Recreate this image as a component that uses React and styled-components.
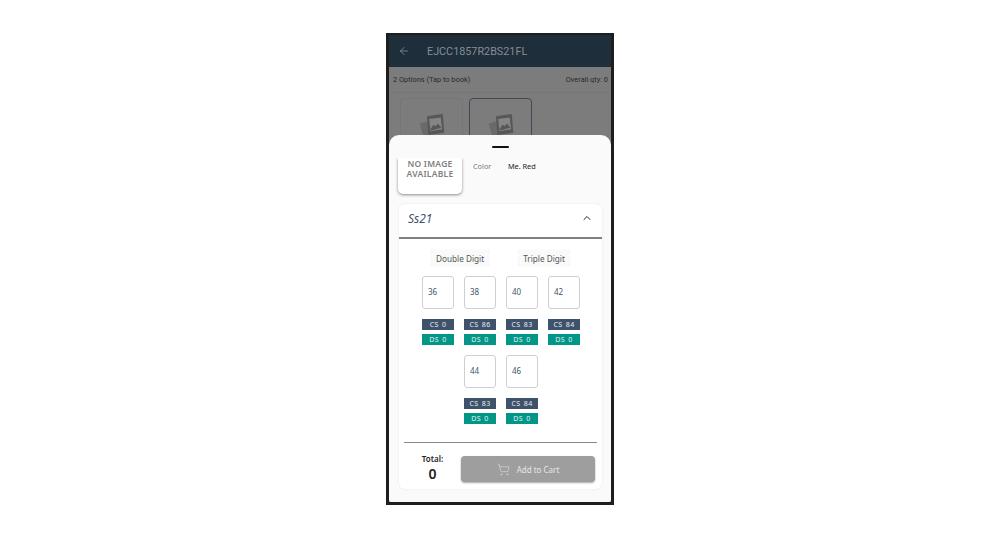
import styled, { createGlobalStyle } from "styled-components";
import { ArrowLeft, ChevronUp, ShoppingCart } from "lucide-react";

const sizes = [
  { size: 36, cs: 0 },
  { size: 38, cs: 86 },
  { size: 40, cs: 83 },
  { size: 42, cs: 84 },
  { size: 44, cs: 83 },
  { size: 46, cs: 84 },
];

function PlaceholderIcon() {
  return (
    <svg width="26" height="26" viewBox="0 0 36 36">
      <path d="M1 13 L12 10 L16 32 L7 34 Z" fill="#6a6a6a" />
      <path d="M11 3 L33 0 L35 26 L13 29 Z" fill="#575757" />
      <path d="M14 7 L30 5 L32 21 L16 24 Z" fill="#858585" />
      <path d="M16 21 L20 15 L23 17 L26 13 L31 19 L17 23 Z" fill="#575757" />
    </svg>
  );
}

function App() {
  return (
    <>
      <GlobalStyle />
      <Page>
        <Phone>
          <TopBar>
            <ArrowLeft size={12} color="#8f979e" strokeWidth={1.5} />
            <Code>EJCC1857R2BS21FL</Code>
          </TopBar>
          <OptionsBar>
            <span>2 Options (Tap to book)</span>
            <span>Overall qty: 0</span>
          </OptionsBar>
          <Options>
            <OptionCard>
              <PlaceholderIcon />
            </OptionCard>
            <OptionCard $selected>
              <PlaceholderIcon />
            </OptionCard>
          </Options>
          <Sheet>
            <Handle />
            <SheetBody>
              <Summary>
                <NoImage>
                  NO IMAGE
                  <br />
                  AVAILABLE
                </NoImage>
                <ColorLabel>Color</ColorLabel>
                <ColorValue>Me. Red</ColorValue>
              </Summary>
              <Card>
                <SeasonHead>
                  <Season>Ss21</Season>
                  <ChevronUp size={12} color="#222" strokeWidth={2} />
                </SeasonHead>
                <Chips>
                  <Chip>Double Digit</Chip>
                  <Chip>Triple Digit</Chip>
                </Chips>
                <Sizes>
                  {sizes.map((item) => (
                    <SizeItem key={item.size}>
                      <SizeBox>{item.size}</SizeBox>
                      <Stock>CS {item.cs}</Stock>
                      <Stock $teal>DS 0</Stock>
                    </SizeItem>
                  ))}
                </Sizes>
                <Footer>
                  <Total>
                    <TotalLabel>Total:</TotalLabel>
                    <TotalValue>0</TotalValue>
                  </Total>
                  <CartButton>
                    <ShoppingCart size={13} color="#d8d8d8" strokeWidth={1.25} />
                    Add to Cart
                  </CartButton>
                </Footer>
              </Card>
            </SheetBody>
          </Sheet>
        </Phone>
      </Page>
    </>
  );
}

const GlobalStyle = createGlobalStyle`
  body {
    margin: 0;
    background: #fff;
    font-family: "Noto Sans", "Lato", sans-serif;
  }
`;

const Page = styled.div`
  height: 539px;
  padding-top: 33px;
  box-sizing: border-box;
  display: flex;
  justify-content: center;
  overflow: hidden;
`;

const Phone = styled.div`
  position: relative;
  width: 228px;
  height: 472px;
  box-sizing: border-box;
  border: 3px solid #1e1e1e;
  border-top-width: 2px;
  background: #7c7c7c;
  overflow: hidden;
`;

const TopBar = styled.div`
  height: 32px;
  background: #1f2e3b;
  display: flex;
  align-items: center;
  padding-left: 9px;
  gap: 17px;
`;

const Code = styled.div`
  font-family: "Roboto", sans-serif;
  font-size: 10.8px;
  color: #858d94;
`;

const OptionsBar = styled.div`
  display: flex;
  justify-content: space-between;
  align-items: center;
  height: 25px;
  padding: 0 3px 0 4px;
  font-family: "Roboto", sans-serif;
  font-size: 7.4px;
  color: #2a2a2a;
  border-bottom: 1px solid #777;
`;

const Options = styled.div`
  display: flex;
  gap: 6px;
  padding: 5px 0 0 11px;
`;

const OptionCard = styled.div`
  width: 63px;
  height: 60px;
  box-sizing: border-box;
  padding-bottom: 2px;
  border: 1px solid ${(p) => (p.$selected ? "#3f4a54" : "#767676")};
  border-radius: 4px;
  display: flex;
  align-items: center;
  justify-content: center;
`;

const Sheet = styled.div`
  position: absolute;
  left: 0;
  right: 0;
  top: 100px;
  bottom: 0;
  background: #fafafa;
  border-radius: 10px 10px 2px 2px;
`;

const Handle = styled.div`
  width: 17px;
  height: 2px;
  border-radius: 1px;
  background: #111;
  margin: 11px auto 0;
`;

const SheetBody = styled.div`
  height: 344px;
  margin-top: 10px;
  overflow: hidden;
`;

const Summary = styled.div`
  display: flex;
  align-items: flex-start;
  height: 46px;
  padding-left: 9px;
`;

const NoImage = styled.div`
  width: 64px;
  height: 36px;
  padding-top: 1px;
  box-sizing: border-box;
  background: #fff;
  border-radius: 0 0 5px 5px;
  box-shadow: 0 1px 3px rgba(0, 0, 0, 0.45);
  font-size: 8.5px;
  font-weight: 600;
  line-height: 9.5px;
  letter-spacing: 0.25px;
  text-align: center;
  color: #808080;
`;

const ColorLabel = styled.div`
  margin: 3px 0 0 11px;
  width: 35px;
  font-size: 7.3px;
  color: #777;
`;

const ColorValue = styled.div`
  margin-top: 3px;
  font-size: 7.3px;
  color: #222;
`;

const Card = styled.div`
  margin: 0 9px 0 10px;
  height: 285px;
  background: #fff;
  border-radius: 6px;
  box-shadow: 0 0 2px rgba(0, 0, 0, 0.1);
  display: flex;
  flex-direction: column;
`;

const SeasonHead = styled.div`
  flex-shrink: 0;
  padding: 0 9px 5px;
  height: 28px;
  display: flex;
  align-items: center;
  justify-content: space-between;
  border-bottom: 2px solid #808080;
`;

const Season = styled.div`
  font-size: 12px;
  font-style: italic;
  color: #3f526c;
`;

const Chips = styled.div`
  display: flex;
  justify-content: center;
  gap: 29px;
  margin-top: 11px;
`;

const Chip = styled.div`
  height: 16px;
  padding: 0 5px;
  display: flex;
  align-items: center;
  border-radius: 2px;
  background: #fafafa;
  box-shadow: 0 0 1px rgba(0, 0, 0, 0.15);
  font-size: 8.2px;
  color: #555;
`;

const Sizes = styled.div`
  width: 158px;
  margin: 10px 0 0 23px;
  display: flex;
  flex-wrap: wrap;
  justify-content: center;
  gap: 10px;
`;

const SizeItem = styled.div`
  width: 32px;
  display: flex;
  flex-direction: column;
`;

const SizeBox = styled.div`
  height: 33px;
  box-sizing: border-box;
  padding: 0 0 2px 5px;
  display: flex;
  align-items: center;
  border: 1.5px solid #cfcfcf;
  border-radius: 3px;
  margin-bottom: 10px;
  font-size: 8px;
  color: #44546a;
  background: #fff;
`;

const Stock = styled.div`
  height: 11px;
  margin-bottom: ${(p) => (p.$teal ? "0" : "4px")};
  display: flex;
  align-items: center;
  justify-content: center;
  background: ${(p) => (p.$teal ? "#009688" : "#3f526c")};
  font-size: 7px;
  letter-spacing: 0.4px;
  word-spacing: 1px;
  color: #e8eef0;
`;

const Footer = styled.div`
  margin: auto 5px 0;
  height: 47px;
  box-sizing: border-box;
  padding: 6px 2px 0 0;
  border-top: 1px solid #888;
  display: flex;
  align-items: center;
`;

const Total = styled.div`
  width: 57px;
  flex-shrink: 0;
  margin-bottom: 4px;
  display: flex;
  flex-direction: column;
  align-items: center;
`;

const TotalLabel = styled.div`
  font-size: 8px;
  font-weight: 600;
  color: #222;
`;

const TotalValue = styled.div`
  margin-top: 2px;
  font-size: 14px;
  font-weight: 600;
  line-height: 16px;
  color: #222;
`;

const CartButton = styled.div`
  flex: 1;
  height: 26px;
  border-radius: 4px;
  background: #9e9e9e;
  box-shadow: 0 1px 2px rgba(0, 0, 0, 0.35);
  display: flex;
  align-items: center;
  justify-content: center;
  gap: 7px;
  font-size: 8px;
  color: #e6e6e6;
`;

export default App;
